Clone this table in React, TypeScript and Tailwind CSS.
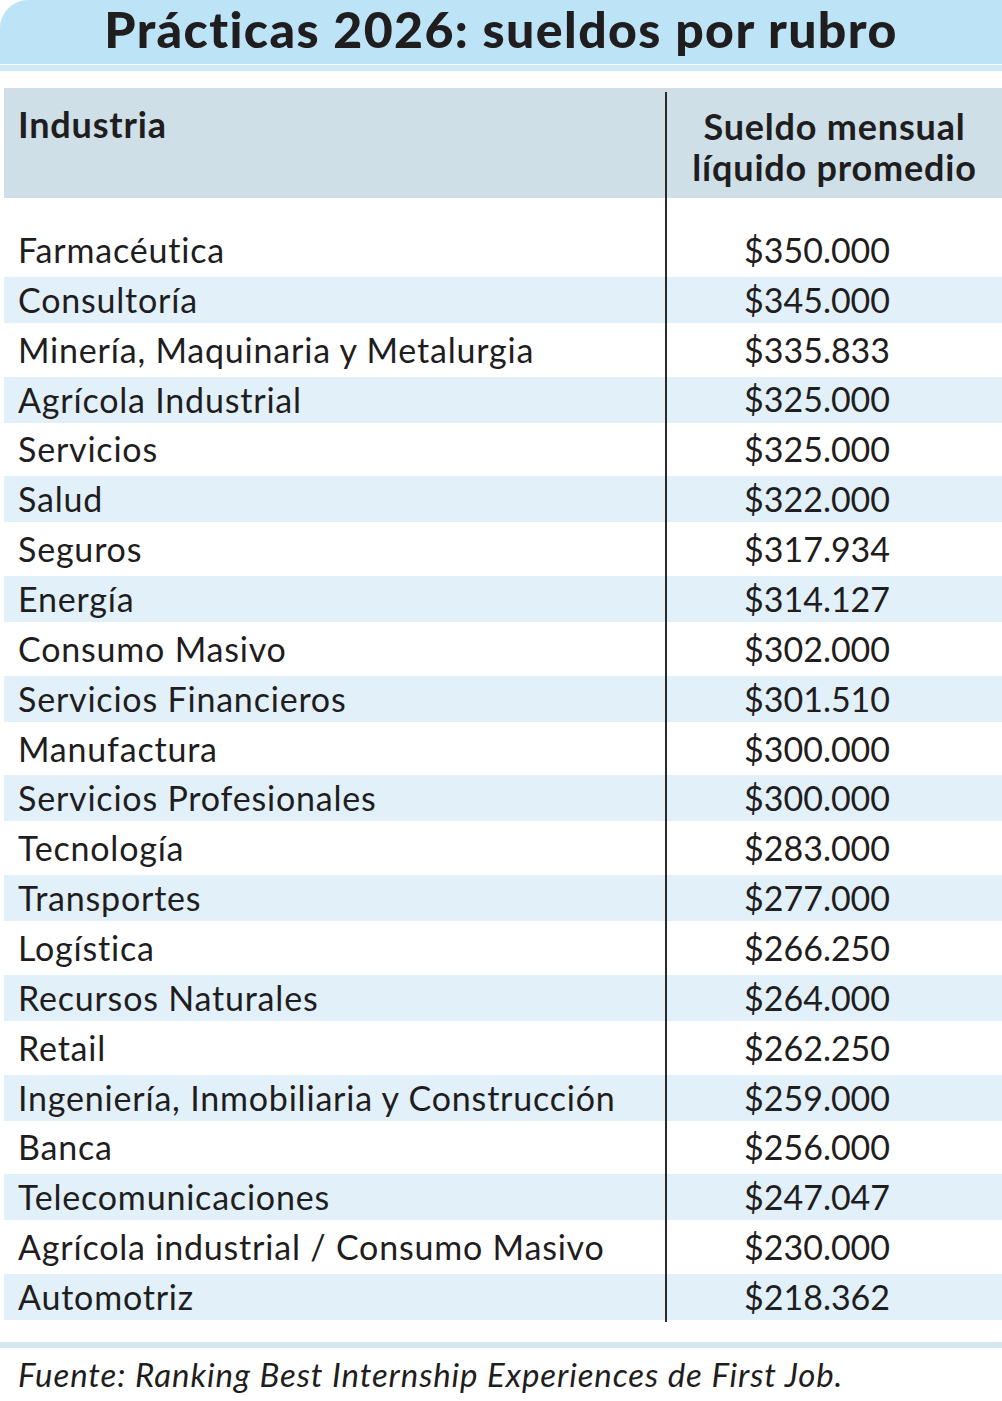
const rows: [string, string][] = [
  ["Farmacéutica", "$350.000"],
  ["Consultoría", "$345.000"],
  ["Minería, Maquinaria y Metalurgia", "$335.833"],
  ["Agrícola Industrial", "$325.000"],
  ["Servicios", "$325.000"],
  ["Salud", "$322.000"],
  ["Seguros", "$317.934"],
  ["Energía", "$314.127"],
  ["Consumo Masivo", "$302.000"],
  ["Servicios Financieros", "$301.510"],
  ["Manufactura", "$300.000"],
  ["Servicios Profesionales", "$300.000"],
  ["Tecnología", "$283.000"],
  ["Transportes", "$277.000"],
  ["Logística", "$266.250"],
  ["Recursos Naturales", "$264.000"],
  ["Retail", "$262.250"],
  ["Ingeniería, Inmobiliaria y Construcción", "$259.000"],
  ["Banca", "$256.000"],
  ["Telecomunicaciones", "$247.047"],
  ["Agrícola industrial / Consumo Masivo", "$230.000"],
  ["Automotriz", "$218.362"],
]

export default function App() {
  return (
    <div className="w-[1002px] min-h-[1401px] bg-white text-[#1f1d1e] font-['Lato',sans-serif]">
      {/* title bar */}
      <div className="flex h-[64px] items-center justify-center rounded-tl-[28px] bg-[#bde3f7] pb-[6px]">
        <h1 className="text-[50px] font-black leading-none tracking-[1.4px]">
          Prácticas 2026: sueldos por rubro
        </h1>
      </div>
      <div className="mt-px h-[6px] bg-[#cfe9f7]" />

      <div className="mt-[17px] ml-[4px]">
        {/* header */}
        <div className="flex h-[110px] border-t-2 border-[#d3dce2] bg-[#cedfe8]">
          <div className="w-[661px] pl-[14px] pt-[16px] text-[36px] font-bold leading-none tracking-[0.8px]">
            Industria
          </div>
          <div className="mt-[2px] flex flex-1 flex-col items-center border-l-2 border-[#2a2a2a] pt-[14px] text-[36px] font-bold leading-[41px] tracking-[0.8px]">
            <span>Sueldo mensual</span>
            <span>líquido promedio</span>
          </div>
        </div>

        {/* spacer */}
        <div className="flex h-[27px]">
          <div className="w-[661px]" />
          <div className="flex-1 border-l-2 border-[#2a2a2a]" />
        </div>

        {/* rows */}
        {rows.map(([name, value], i) => (
          <div key={name} className="flex h-[49.86px] items-center">
            <div
              className={`flex h-[46px] w-full items-center text-[34px] leading-none ${
                i % 2 === 1 ? "bg-[#e1f0f9]" : ""
              }`}
            >
              <div className="w-[661px] pl-[14px] tracking-[0.8px]">{name}</div>
              <div className="-my-[2px] flex h-[49.86px] flex-1 items-center border-l-2 border-[#2a2a2a] pl-[77px]">
                {value}
              </div>
            </div>
          </div>
        ))}
      </div>

      {/* bottom rule and source */}
      <div className="mt-[20px] h-[6px] bg-[#d6e6ef]" />
      <p className="mt-[10px] pl-[18px] text-[33px] italic leading-none tracking-[0.9px]">
        Fuente: Ranking Best Internship Experiences de First Job.
      </p>
    </div>
  )
}
